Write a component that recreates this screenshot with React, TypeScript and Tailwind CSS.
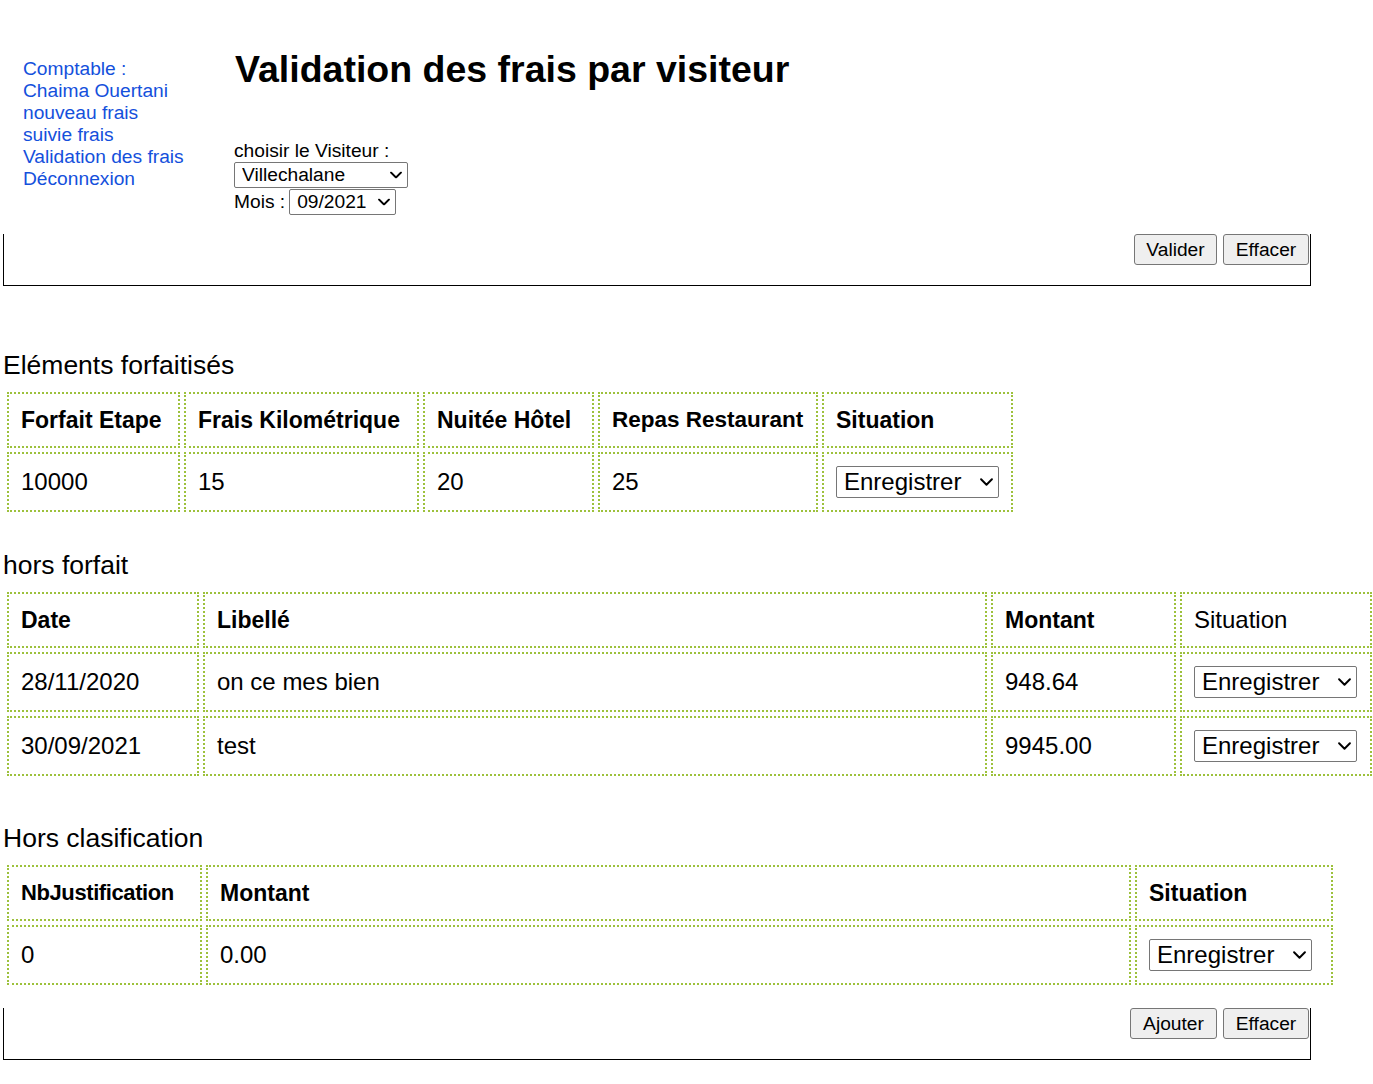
import React from "react";

const FONT = "font-['Liberation_Sans',Arial,sans-serif]";

function Chevron({ w, h }: { w: number; h: number }) {
  return (
    <svg
      width={w}
      height={h}
      viewBox="0 0 12 7"
      fill="none"
      className="pointer-events-none absolute right-[6px] top-1/2 -translate-y-1/2"
    >
      <path d="M1 1l5 5 5-5" stroke="#000" strokeWidth="1.8" strokeLinecap="round" strokeLinejoin="round" />
    </svg>
  );
}

function SmallSelect({ value, width }: { value: string; width: string }) {
  return (
    <div className={`relative h-[26px] ${width}`}>
      <select
        defaultValue={value}
        className="appearance-none w-full h-full border border-[#767676] rounded-[2px] bg-white pl-[7px] text-[19.2px] leading-[22px] text-black"
      >
        <option>{value}</option>
      </select>
      <Chevron w={12} h={7} />
    </div>
  );
}

function CellSelect() {
  return (
    <div className="relative h-[32px] w-[163px]">
      <select
        defaultValue="Enregistrer"
        className="appearance-none w-full h-full border border-[#767676] rounded-[2px] bg-white pl-[7px] text-[24px] leading-[28px] text-black"
      >
        <option>Enregistrer</option>
        <option>Valider</option>
        <option>Refuser</option>
      </select>
      <Chevron w={13} h={8} />
    </div>
  );
}

const cell =
  "border-2 border-dotted border-[#9dc13c] p-[12px] align-middle whitespace-nowrap overflow-hidden";

function H({
  children,
  size = "text-[23px]",
  bold = true,
}: {
  children: React.ReactNode;
  size?: string;
  bold?: boolean;
}) {
  return <td className={`${cell} ${size} leading-[28px] ${bold ? "font-bold" : ""}`}>{children}</td>;
}

function D({ children }: { children: React.ReactNode }) {
  return <td className={`${cell} text-[24px] leading-[28px]`}>{children}</td>;
}

function Btn({ label, width }: { label: string; width: string }) {
  return (
    <button
      type="button"
      className={`${width} h-[31px] bg-[#efefef] border border-[#767676] rounded-[3px] text-[19.2px] leading-[22px] text-black`}
    >
      {label}
    </button>
  );
}

function ButtonBox({ first, firstW }: { first: string; firstW: string }) {
  return (
    <div className="w-[1308px] h-[52px] border-x border-b border-black flex justify-end items-start gap-[6px] pr-[1px]">
      <Btn label={first} width={firstW} />
      <Btn label="Effacer" width="w-[86px]" />
    </div>
  );
}

function Title({ children, mt }: { children: React.ReactNode; mt: string }) {
  return <div className={`${mt} text-[26.5px] leading-[30px]`}>{children}</div>;
}

export default function App() {
  return (
    <div className={`${FONT} text-black bg-white min-h-screen pl-[3px] pb-[20px]`}>
      {/* header */}
      <div className="flex">
        <nav className="ml-[20px] mt-[58px] w-[211px] text-[19.2px] leading-[22px] text-[#1450dc]">
          <div>Comptable :</div>
          <div>Chaima Ouertani</div>
          <a className="block" href="#">nouveau frais</a>
          <a className="block" href="#">suivie frais</a>
          <a className="block" href="#">Validation des frais</a>
          <a className="block" href="#">Déconnexion</a>
        </nav>
        <div>
          <h1 className="mt-[47px] pl-[1px] text-[37.5px] leading-[44px] font-bold">
            Validation des frais par visiteur
          </h1>
          <div className="mt-[49px] text-[19.2px] leading-[22px]">
            <div>choisir le Visiteur :</div>
            <div>
              <SmallSelect value="Villechalane" width="w-[174px]" />
            </div>
            <div className="mt-[1px] flex items-center h-[26px]">
              <span className="mr-[4px]">Mois :</span>
              <SmallSelect value="09/2021" width="w-[107px]" />
            </div>
          </div>
        </div>
      </div>

      <div className="mt-[19px]">
        <ButtonBox first="Valider" firstW="w-[83px]" />
      </div>

      {/* Eléments forfaitisés */}
      <Title mt="mt-[64px]">Eléments forfaitisés</Title>
      <table className="mt-[8px] border-separate border-spacing-[4px] table-fixed w-[1014px]">
        <colgroup>
          <col className="w-[173px]" />
          <col className="w-[235px]" />
          <col className="w-[171px]" />
          <col className="w-[220px]" />
          <col className="w-[191px]" />
        </colgroup>
        <tbody>
          <tr>
            <H>Forfait Etape</H>
            <H>Frais Kilométrique</H>
            <H>Nuitée Hôtel</H>
            <H size="text-[22.5px]">Repas Restaurant</H>
            <H>Situation</H>
          </tr>
          <tr>
            <D>10000</D>
            <D>15</D>
            <D>20</D>
            <D>25</D>
            <td className={cell}>
              <CellSelect />
            </td>
          </tr>
        </tbody>
      </table>

      {/* hors forfait */}
      <Title mt="mt-[34px]">hors forfait</Title>
      <table className="mt-[8px] border-separate border-spacing-[4px] table-fixed w-[1373px]">
        <colgroup>
          <col className="w-[192px]" />
          <col className="w-[784px]" />
          <col className="w-[185px]" />
          <col className="w-[192px]" />
        </colgroup>
        <tbody>
          <tr>
            <H>Date</H>
            <H>Libellé</H>
            <H>Montant</H>
            <H size="text-[24px]" bold={false}>
              Situation
            </H>
          </tr>
          <tr>
            <D>28/11/2020</D>
            <D>on ce mes bien</D>
            <D>948.64</D>
            <td className={cell}>
              <CellSelect />
            </td>
          </tr>
          <tr>
            <D>30/09/2021</D>
            <D>test</D>
            <D>9945.00</D>
            <td className={cell}>
              <CellSelect />
            </td>
          </tr>
        </tbody>
      </table>

      {/* Hors clasification */}
      <Title mt="mt-[43px]">Hors clasification</Title>
      <table className="mt-[8px] border-separate border-spacing-[4px] table-fixed w-[1334px]">
        <colgroup>
          <col className="w-[195px]" />
          <col className="w-[925px]" />
          <col className="w-[198px]" />
        </colgroup>
        <tbody>
          <tr>
            <H size="text-[22px] tracking-[-0.4px]">NbJustification</H>
            <H>Montant</H>
            <H>Situation</H>
          </tr>
          <tr>
            <D>0</D>
            <D>0.00</D>
            <td className={cell}>
              <CellSelect />
            </td>
          </tr>
        </tbody>
      </table>

      <div className="mt-[19px]">
        <ButtonBox first="Ajouter" firstW="w-[87px]" />
      </div>
    </div>
  );
}
